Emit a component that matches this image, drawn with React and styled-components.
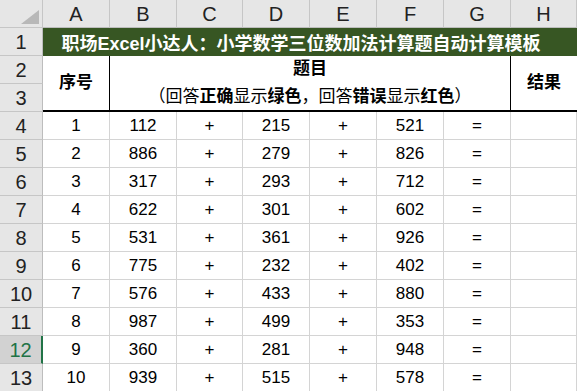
import React from "react";
import styled, { createGlobalStyle } from "styled-components";

const GlobalStyle = createGlobalStyle`
    html, body {
        margin: 0;
        padding: 0;
        background: #ffffff;
        overflow: hidden;
    }
    body {
        font-family: "Liberation Sans", "Noto Sans CJK SC", sans-serif;
    }
`;

const Sheet = styled.div`
    display: grid;
    grid-template-columns: 43px 67px 67px 66px 67px 67px 67px 67px 66px;
    grid-auto-rows: 28px;
    width: 577px;
`;

const Corner = styled.div`
    box-sizing: border-box;
    background: #e6e6e6;
    border-right: 1px solid #c6c6c6;
    border-bottom: 1px solid #c6c6c6;
    display: flex;
    align-items: flex-end;
    justify-content: flex-end;
    padding: 0 3px 3px 0;
`;

const ColHeader = styled.div`
    box-sizing: border-box;
    background: #e6e6e6;
    border-right: 1px solid #c6c6c6;
    border-bottom: 1px solid #bdbdbd;
    display: flex;
    align-items: center;
    justify-content: center;
    font-size: 20px;
    color: #222;
    padding-top: 2px;
`;

const RowHeader = styled.div`
    box-sizing: border-box;
    background: ${(p) => (p.$selected ? "#d2d2d2" : "#e6e6e6")};
    color: ${(p) => (p.$selected ? "#217346" : "#222")};
    border-right: ${(p) => (p.$selected ? "2px solid #217346" : "1px solid #bdbdbd")};
    border-bottom: 1px solid #c6c6c6;
    display: flex;
    align-items: center;
    justify-content: center;
    font-size: 20px;
    padding-top: 2px;
`;

const TitleCell = styled.div`
    grid-column: span 8;
    box-sizing: border-box;
    background: #375623;
    color: #ffffff;
    display: flex;
    align-items: center;
    justify-content: center;
    font-size: 18px;
    font-weight: bold;
    padding: 1px 18px 0 0;
    border-bottom: 1px solid #375623;
`;

const HeadCell = styled.div`
    grid-column: span ${(p) => p.$span || 1};
    grid-row: span 2;
    box-sizing: border-box;
    border-right: ${(p) => (p.$last ? "none" : "1px solid #000")};
    border-bottom: 2px solid #000;
    display: flex;
    flex-direction: column;
    align-items: center;
    justify-content: center;
    font-size: 17px;
    color: #000;
    line-height: 28px;
`;

const Bold = styled.span`
    font-weight: bold;
`;

const Cell = styled.div`
    box-sizing: border-box;
    border-right: 1px solid #d4d4d4;
    border-bottom: 1px solid #d4d4d4;
    display: flex;
    align-items: center;
    justify-content: center;
    font-size: 17px;
    color: #000;
    padding-top: 1px;
`;

const cols = ["A", "B", "C", "D", "E", "F", "G", "H"];

const rows = [
    [1, 112, 215, 521],
    [2, 886, 279, 826],
    [3, 317, 293, 712],
    [4, 622, 301, 602],
    [5, 531, 361, 926],
    [6, 775, 232, 402],
    [7, 576, 433, 880],
    [8, 987, 499, 353],
    [9, 360, 281, 948],
    [10, 939, 515, 578],
];

const App = () => {
    return (
        <>
            <GlobalStyle />
            <Sheet>
                <Corner>
                    <svg width="18" height="14" viewBox="0 0 18 14">
                        <polygon points="18,0 18,14 0,14" fill="#b8b8b8" />
                    </svg>
                </Corner>
                {cols.map((c) => (
                    <ColHeader key={c}>{c}</ColHeader>
                ))}

                <RowHeader>1</RowHeader>
                <TitleCell>职场Excel小达人：小学数学三位数加法计算题自动计算模板</TitleCell>

                <RowHeader>2</RowHeader>
                <HeadCell>
                    <Bold>序号</Bold>
                </HeadCell>
                <HeadCell $span={6}>
                    <Bold>题目</Bold>
                    <span>
                        （回答<Bold>正确</Bold>显示<Bold>绿色</Bold>，回答<Bold>错误</Bold>显示<Bold>红色</Bold>）
                    </span>
                </HeadCell>
                <HeadCell $last>
                    <Bold>结果</Bold>
                </HeadCell>
                <RowHeader>3</RowHeader>

                {rows.map(([n, a, b, c], i) => (
                    <React.Fragment key={n}>
                        <RowHeader $selected={i + 4 === 12}>{i + 4}</RowHeader>
                        <Cell>{n}</Cell>
                        <Cell>{a}</Cell>
                        <Cell>+</Cell>
                        <Cell>{b}</Cell>
                        <Cell>+</Cell>
                        <Cell>{c}</Cell>
                        <Cell>=</Cell>
                        <Cell />
                    </React.Fragment>
                ))}
            </Sheet>
        </>
    );
};

export default App;
